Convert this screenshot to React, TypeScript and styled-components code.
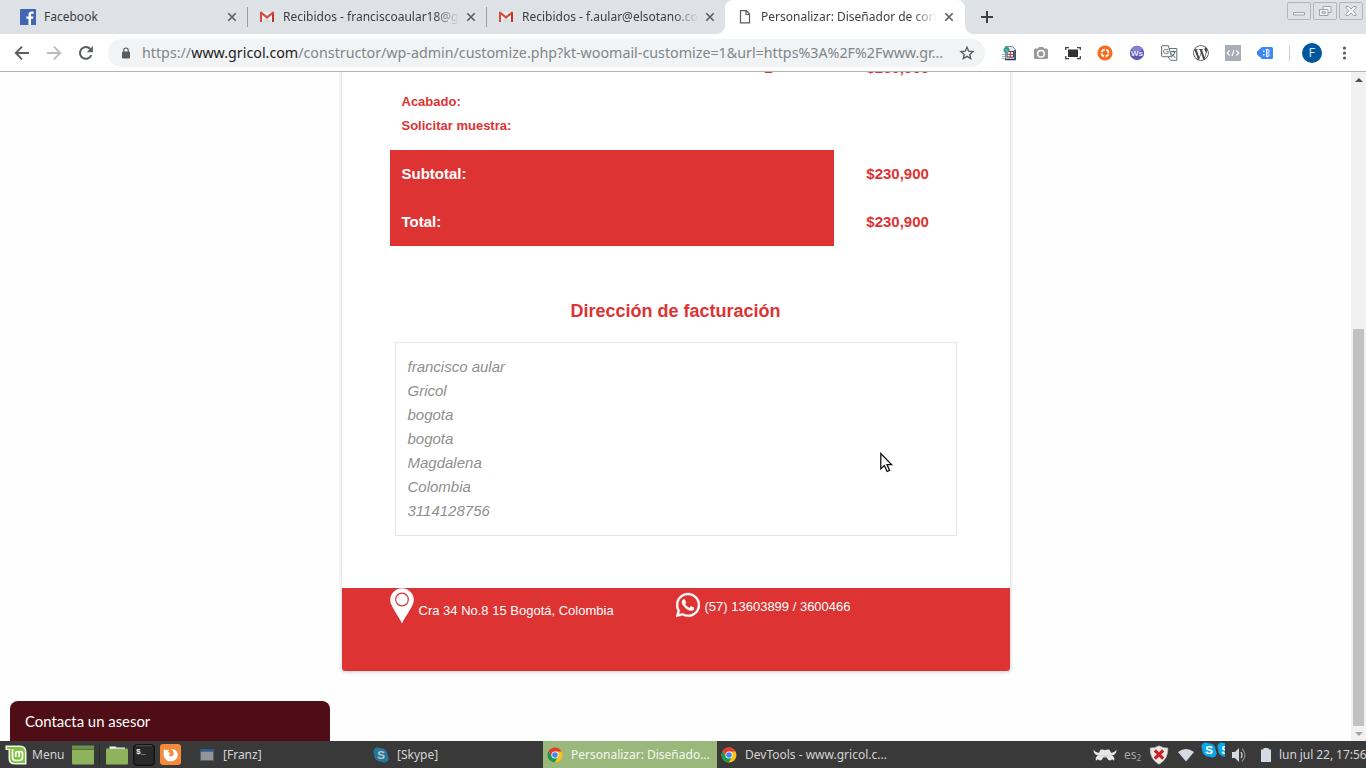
import React from 'react';
import styled, { createGlobalStyle } from 'styled-components';
import { FaWordpressSimple, FaWhatsapp } from 'react-icons/fa';

const GlobalStyle = createGlobalStyle`
  * { box-sizing: border-box; }
  html, body { margin: 0; padding: 0; overflow: hidden; }
  svg { display: block; flex: none; }
`;

const Desktop = styled.div`
  position: relative;
  width: 1366px;
  height: 768px;
  display: flex;
  flex-direction: column;
  overflow: hidden;
  background: #fefefe;
  font-family: 'Noto Sans', sans-serif;
`;

/* ---------- browser ---------- */
const TabStrip = styled.div`
  height: 34px;
  flex: none;
  display: flex;
  background: #dee1e6;
  padding-left: 8px;
`;

const Tab = styled.div<{ $active?: boolean; $line?: boolean }>`
  position: relative;
  width: ${(p) => (p.$active ? 240 : 239)}px;
  height: 34px;
  display: flex;
  align-items: center;
  padding: 0 ${(p) => (p.$active ? 10 : 9)}px 0 12px;
  background: ${(p) => (p.$active ? '#fff' : 'transparent')};
  border-radius: 8px 8px 0 0;
  &::after {
    content: '';
    display: ${(p) => (p.$line ? 'block' : 'none')};
    position: absolute;
    right: -1px;
    top: 7px;
    width: 1px;
    height: 20px;
    background: #989ba0;
  }
`;

const TabFoot = styled.i<{ $side: 'left' | 'right' }>`
  position: absolute;
  bottom: 0;
  ${(p) => p.$side}: -8px;
  width: 8px;
  height: 8px;
  background: radial-gradient(circle at ${(p) => (p.$side === 'left' ? '0 0' : '100% 0')}, transparent 7.5px, #fff 8px);
`;

const TabTitle = styled.span<{ $fade?: boolean }>`
  width: 175px;
  margin-left: 8px;
  overflow: hidden;
  white-space: nowrap;
  font-size: 12px;
  line-height: 18px;
  color: #3c4043;
  ${(p) => p.$fade && 'mask-image: linear-gradient(to right, #000 152px, transparent 176px);'}
`;

const TabClose = styled.div`
  margin-left: auto;
`;

const NewTab = styled.div`
  display: flex;
  align-items: center;
  margin-left: 15px;
`;

const WindowButtons = styled.div`
  display: flex;
  gap: 2px;
  margin: 2px 3px 0 auto;
`;

const WindowButton = styled.div`
  width: 24px;
  height: 18px;
  display: flex;
  align-items: center;
  justify-content: center;
  border: 1px solid #b4b6ba;
  border-radius: 2px;
`;

const Toolbar = styled.div`
  height: 38px;
  flex: none;
  display: flex;
  align-items: center;
  background: #fff;
  border-bottom: 1px solid #b0b3b0;
`;

const NavButtons = styled.div`
  display: flex;
  gap: 16px;
  width: 108px;
  padding-left: 14px;
`;

const AddressBar = styled.div`
  width: 877px;
  height: 28px;
  display: flex;
  align-items: center;
  padding: 0 10px 0 13px;
  border-radius: 14px;
  background: #f1f3f4;
`;

const Url = styled.span`
  width: 817px;
  flex: none;
  margin-left: 11px;
  white-space: nowrap;
  font-size: 14.270px;
  line-height: 20px;
  color: #80868b;
  b { font-weight: 400; color: #202124; }
`;

const Extensions = styled.div`
  display: flex;
  margin-left: 8px;
`;

const Extension = styled.div`
  width: 32px;
  height: 20px;
  display: flex;
  align-items: center;
  justify-content: center;
`;

const ToolbarRule = styled.div`
  width: 1px;
  height: 16px;
  margin: 0 12px 0 8px;
  background: #cfd2d6;
`;

const Avatar = styled.div`
  width: 20px;
  height: 20px;
  border-radius: 50%;
  background: #01579b;
  color: #d5e4f0;
  font: 12px/20px Roboto, sans-serif;
  text-align: center;
`;

/* ---------- page ---------- */
const Viewport = styled.div`
  position: relative;
  height: 669px;
  flex: none;
  display: flex;
  overflow: hidden;
`;

const Page = styled.div`
  flex: 1;
  display: flex;
  align-items: flex-start;
  padding-left: 342px;
`;

const Email = styled.div`
  width: 668px;
  height: 615px;
  margin-top: -16px;
  display: flex;
  flex-direction: column;
  background: #fff;
  border-radius: 3px;
  box-shadow: 0 1px 4px rgba(0, 0, 0, 0.2);
  font-family: 'Liberation Sans', Arial, sans-serif;
  overflow: hidden;
`;

const red = '#dd3333';

const OrderLine = styled.div`
  display: flex;
  height: 34px;
  padding-left: 422.5px;
  font-weight: 700;
  font-size: 15px;
  line-height: 24px;
  color: ${red};
  span { width: 102px; }
`;

const Options = styled.div`
  height: 60px;
  padding-left: 59.5px;
  font-weight: 700;
  font-size: 13px;
  line-height: 24px;
  color: ${red};
`;

const TotalRow = styled.div`
  display: flex;
  height: 48px;
  flex: none;
  margin-left: 48px;
  font-weight: 700;
  font-size: 15px;
  line-height: 48px;
`;

const TotalLabel = styled.div`
  width: 444px;
  padding-left: 11.5px;
  background: ${red};
  color: #fff;
`;

const TotalValue = styled.div`
  padding-left: 32.300px;
  color: ${red};
`;

const AddressTitle = styled.h2`
  height: 26px;
  margin: 52px 1px 18px 0;
  font-size: 18px;
  line-height: 26px;
  text-align: center;
  color: ${red};
`;

const AddressBox = styled.div`
  width: 562px;
  height: 194px;
  margin-left: 53px;
  padding: 12px 11.5px;
  border: 1px solid #e5e5e5;
  font-style: italic;
  font-size: 15px;
  line-height: 24px;
  color: #8f8f8f;
`;

const EmailFooter = styled.div`
  display: flex;
  align-items: flex-start;
  height: 83px;
  margin-top: auto;
  padding-left: 48px;
  background: ${red};
  color: #fff;
  font-size: 13px;
  line-height: 20px;
`;

const FooterCell = styled.div<{ $width: number; $gap: number; $textTop: number }>`
  display: flex;
  width: ${(p) => p.$width}px;
  gap: ${(p) => p.$gap}px;
  span { padding-top: ${(p) => p.$textTop}px; white-space: nowrap; color: #fff; }
`;

const Scrollbar = styled.div`
  width: 15px;
  display: flex;
  flex-direction: column;
  align-items: center;
  background: #f1f1f1;
`;

const ScrollArrow = styled.div`
  height: 15px;
  display: flex;
  align-items: center;
`;

const Thumb = styled.div`
  width: 11px;
  height: 397px;
  margin: 242px 0 0;
  background: #c1c1c1;
`;

const ChatTab = styled.div`
  position: absolute;
  left: 10px;
  bottom: 0;
  width: 320px;
  height: 40px;
  padding-left: 15px;
  border-radius: 8px 8px 0 0;
  background: #4f0e15;
  color: #fff;
  font: 14.900px/40px Lato, sans-serif;
`;

const Pointer = styled.div`
  position: absolute;
  left: 880px;
  top: 452px;
`;

/* ---------- taskbar ---------- */
const Panel = styled.div`
  height: 27px;
  flex: none;
  display: flex;
  align-items: center;
  background: #393939;
  color: #d4d4d4;
  font-size: 12px;
  line-height: 18px;
  white-space: nowrap;
`;

const Launchers = styled.div`
  width: 195px;
  display: flex;
  align-items: center;
  padding-left: 5px;
`;

const MenuLabel = styled.span`
  width: 40px;
  margin-left: 5px;
`;

const LauncherRule = styled.div`
  width: 1px;
  height: 20px;
  margin: 0 6px 0 5px;
  background: #2c2c2c;
`;

const LauncherGap = styled.div`
  width: 5px;
`;

const Task = styled.div<{ $active?: boolean }>`
  width: 174px;
  height: 27px;
  display: flex;
  align-items: center;
  gap: 8px;
  padding-left: 4px;
  background: ${(p) => (p.$active ? '#9ab87c' : 'transparent')};
  color: ${(p) => (p.$active ? '#f4f7f0' : '#d4d4d4')};
`;

const Tray = styled.div`
  display: flex;
  align-items: center;
  margin-left: auto;
`;

const TrayItem = styled.div<{ $width: number }>`
  width: ${(p) => p.$width}px;
  display: flex;
`;

const Clock = styled.span`
  width: 87px;
  letter-spacing: -0.060px;
`;

const Layout = styled.span`
  color: #a5a5a5;
  sub { font-size: 8px; line-height: 0; vertical-align: -2px; }
`;

/* ---------- icons ---------- */
const Gmail = () => (
  <svg width="16" height="16" viewBox="0 0 16 16">
    <path d="M2 3h12v10H2z" fill="#eceff1" />
    <path d="M3 13l5-5 5 5z" fill="#dcdcdc" />
    <path d="M1 3.600Q1 2.400 2.300 2.400L8 7l5.700-4.600Q15 2.400 15 3.600V13h-2V5.800L8 9.800 3 5.800V13H1z" fill="#d54b3d" />
    <path d="M13 5.800V13h2V3.600z" fill="#b93629" />
  </svg>
);

const FacebookLogo = () => (
  <svg width="16" height="16" viewBox="0 0 16 16">
    <rect width="16" height="16" rx=".6" fill="#4267b2" />
    <path d="M11 16v-6.200h2.100l.4-2.400H11V5.900c0-.8.3-1.200 1.300-1.200h1.300V2.600c-3.400-.6-5.100.5-5.100 3v1.800H6.400v2.400h2.100V16z" fill="#fff" />
  </svg>
);

const Doc = () => (
  <svg width="16" height="16" viewBox="0 0 16 16" fill="none" stroke="#5a5d61" strokeWidth="1.200">
    <path d="M3.500 1.600h6L12.500 5v8.900h-9zM9 1.600V5.500h3.500" />
  </svg>
);

const Cross = () => (
  <svg width="12" height="12" viewBox="0 0 12 12" stroke="#5a5d61" strokeWidth="1.600">
    <path d="M2.300 2.300l7.400 7.400M9.700 2.300L2.300 9.700" />
  </svg>
);

const Chrome = () => (
  <svg width="16" height="16" viewBox="0 0 16 16">
    <circle cx="8" cy="8" r="7.500" fill="#fbc116" />
    <path d="M8 8L4.900 9.800 1.500 4.200A7.500 7.500 0 0 1 14.500 4.400H8z" fill="#e33b2e" />
    <path d="M1.500 4.200A7.500 7.500 0 0 0 7.600 15.500L11.100 9.800 8 8 4.900 9.800z" fill="#169a50" />
    <circle cx="8" cy="8" r="3.600" fill="#fff" />
    <circle cx="8" cy="8" r="2.800" fill="#4285f4" />
  </svg>
);

const PageGlobe = () => (
  <svg width="16" height="16" viewBox="0 0 16 16">
    <path d="M4.500 1.500h7l3 3v10h-10z" fill="#dfe7f0" stroke="#5b6c8c" strokeWidth=".8" />
    <path d="M14 5v9.500H4" fill="none" stroke="#24375b" strokeWidth="1.400" />
    <rect x="6" y="6.500" width="6.500" height="5.500" fill="#fff" stroke="#47223a" strokeWidth=".9" />
    <path d="M9.300 6v6.500M6 9.300h6.500" stroke="#b02c42" />
    <circle cx="5.500" cy="5" r="3" fill="#2b9f66" />
    <path d="M3.500 3.500l3 1 1 2-2 1z" fill="#65a9e8" />
    <path d="M.5 9.500h3.500M1 11.500h3M.5 13.500h3.500" stroke="#8fb5ae" strokeWidth=".9" />
  </svg>
);

const Camera = () => (
  <svg width="16" height="16" viewBox="0 0 16 16">
    <path d="M2.500 3.500H5L6 2h4l1 1.500h2.500q1.500 0 1.500 1.500v7.500q0 1.500-1.500 1.500h-11Q1 14 1 12.500V5q0-1.500 1.500-1.500z" fill="#999" />
    <circle cx="8" cy="8.700" r="3.300" fill="none" stroke="#fff" strokeWidth="1.500" />
  </svg>
);

const Capture = () => (
  <svg width="16" height="16" viewBox="0 0 16 16">
    <rect x="3" y="4.500" width="10" height="7.500" fill="#333" />
    <path d="M.7 5V2.700H4M12 2.700h3.300V5M15.300 11v2.600H12M4 13.600H.7V11" fill="none" stroke="#444" strokeWidth="1.300" />
  </svg>
);

const Lifebuoy = () => (
  <svg width="16" height="16" viewBox="0 0 16 16">
    <circle cx="8" cy="8" r="7.600" fill="#f86c1f" />
    <circle cx="8" cy="8" r="3.500" fill="none" stroke="#fff" strokeWidth="1.900" strokeDasharray="4 1.500" strokeDashoffset="-.8" />
  </svg>
);

const WsBall = () => (
  <svg width="16" height="16" viewBox="0 0 16 16">
    <circle cx="8" cy="8" r="7.200" fill="#5f5bb5" />
    <ellipse cx="8" cy="4" rx="5" ry="2.700" fill="#8783d0" />
    <text x="8" y="11" textAnchor="middle" fontSize="8" fontWeight="700" fontFamily="Liberation Sans, sans-serif" fill="#e8e8fa">Ws</text>
  </svg>
);

const Translate = () => (
  <svg width="17" height="16" viewBox="0 0 17 16">
    <path d="M7.500 3.500h8.300v11.800H9.500L7 11.800" fill="#fff" stroke="#66707a" />
    <path d="M1 .7h6.300l3.200 11H1.500Q.6 11.700.6 11V1.200z" fill="#f5f7f8" stroke="#66707a" />
    <text x="1.700" y="9" fontSize="8" fontFamily="Liberation Sans, sans-serif" fill="#4e5861">G</text>
    <path d="M9.500 6.700h5.500M12.200 5.500v1.200M13.700 7c-.5 2.500-2 4-3.200 5M10.500 8.500c1 2 2.500 3.200 4 4" fill="none" stroke="#4e5861" />
  </svg>
);

const CodeBox = () => (
  <svg width="16" height="16" viewBox="0 0 16 16">
    <rect width="16" height="16" fill="#a9adb7" />
    <path d="M4.600 5.500L2.200 8l2.400 2.500M11.400 5.500L13.800 8l-2.400 2.500M9 5l-2 6" fill="none" stroke="#fff" strokeWidth="1.200" />
  </svg>
);

const BlueTag = () => (
  <svg width="16" height="16" viewBox="0 0 16 16">
    <path d="M5 2h9.500Q16 2 16 3.500v9q0 1.500-1.500 1.500H5L0 9.500v-3z" fill="#3f87f5" />
    <path d="M6 5.500h1.500V7H6zM6 9h1.500v1.500H6zM9 4h1.200v8H9zM10 4h1.500v1.200H10zM10 7.400h1.500v1.200H10zM10 10.800h1.500V12H10zM11.400 5h1.100v2.500h-1.100zM11.400 8.500h1.100V11h-1.100z" fill="#fff" />
  </svg>
);

const WinControl = ({ d }: { d: string }) => (
  <svg width="14" height="12" viewBox="0 0 14 12" fill="#f2f3f5" stroke="#9fa2a6" strokeWidth="1"><path d={d} /></svg>
);

const SkypeBlob = ({ dim }: { dim?: boolean }) => (
  <svg width="16" height="16" viewBox="0 0 16 16">
    <g fill={dim ? '#28779b' : '#0da7e8'}>
      <circle cx="8" cy="8" r="6.800" />
      <circle cx="4.700" cy="4.700" r="4.300" />
      <circle cx="11.300" cy="11.300" r="4.300" />
    </g>
    <text x="8" y="12" textAnchor="middle" fontSize="11.500" fontWeight="700" fontFamily="Liberation Sans, sans-serif" fill={dim ? '#b4c6ce' : '#fff'}>S</text>
  </svg>
);

const Mint = () => (
  <svg width="22" height="20" viewBox="0 0 22 20">
    <path d="M.5.5H15q6.500 0 6.500 6.500v12.500H10q-6.500 0-6.500-6V5H.5z" fill="#f1f4ed" />
    <path d="M2 2h13q5 0 5 5v11H10q-5 0-5-5V4H2z" fill="#82c341" />
    <path d="M7.500 4v8q0 3.500 3.500 3.500h3q3.500 0 3.500-3.500V8.500q0-2-1.700-2t-1.700 2V12M14.100 8.500q0-2-1.700-2t-1.700 2V12" fill="none" stroke="#fff" strokeWidth="1.700" />
  </svg>
);

const GreenWindow = () => (
  <svg width="22" height="20" viewBox="0 0 22 20">
    <rect y="1" width="22" height="18.500" rx="1" fill="#8db35c" />
    <path d="M0 .5h22v4H0z" fill="#6f8f48" /><path d="M0 4.500h22" stroke="#55703a" />
  </svg>
);

const Folder = () => (
  <svg width="22" height="20" viewBox="0 0 22 20">
    <path d="M1 3.500h20q1 0 1 1v14q0 1-1 1H1q-1 0-1-1v-14q0-1 1-1z" fill="#8db35c" />
    <path d="M3.500 3.800V1.500h6l1 1H19v1.300z" fill="#f7f7f7" />
  </svg>
);

const Terminal = () => (
  <svg width="22" height="22" viewBox="0 0 22 22">
    <rect x=".7" y=".7" width="20.600" height="20.600" rx="3.500" fill="#292929" stroke="#121212" strokeWidth="1.400" />
    <path d="M3 1.700h16" stroke="#777" strokeWidth=".6" />
    <text x="3" y="9.500" fontSize="8" fontWeight="700" fontFamily="Liberation Mono, monospace" fill="#eee">$_</text>
  </svg>
);

const Firefox = () => (
  <svg width="21" height="21" viewBox="0 0 20 20">
    <rect width="20" height="20" rx="3" fill="#f58a3c" />
    <path d="M3.700 4.500l1.700 1.700c1-.8 2.200-1 3.300-.6L7.500 7.700l2.200.8c0 1-1.200 1.200-1.200 2.200 1.200 2.200 4.500 1 4.500-1.700 0-1.800-1-3.200-2.500-4 4-.6 6.400 2 6.400 5.200 0 3.600-2.900 6.300-6.600 6.300S3.500 13.900 3.500 10.200c0-2 0-3.700.2-5.700z" fill="#fff" />
  </svg>
);

const FranzWindow = () => (
  <svg width="16" height="16" viewBox="0 0 16 16">
    <rect x="1.500" y="2.500" width="13" height="11" fill="#92959a" stroke="#5c5f63" />
    <path d="M1 2h14v2.700H1z" fill="#315985" />
  </svg>
);

const AgentHat = () => (
  <svg width="24" height="16" viewBox="0 0 24 16" fill="#e6e6e6">
    <path d="M.5 2.500q1.500 3 5.500 3.300L7.500 2.800q2.500-.6 4.500.5 2-1.100 4.500-.5L18 5.800q4-.3 5.500-3.300Q23.500 7 20 8.200L12 9 4 8.200Q.5 7 .5 2.500z" />
    <path d="M3 14q-1.500-4.500 3-6l4 .5 2 1 2-1 4-.5q4.500 1.500 3 6-1.500-2.500-3.500-.5-3 0-3.500-3h-4q-.5 3-3.500 3-2-2-3.500.5z" />
  </svg>
);

const ShieldCross = () => (
  <svg width="20" height="20" viewBox="0 0 20 20">
    <path d="M10 .8q4.500 2.700 8.800 2.200Q19.500 14 10 19.200.5 14 1.200 3 5.500 3.500 10 .8z" fill="#ece9e4" stroke="#bcb9b4" strokeWidth=".7" />
    <path d="M5.800 5.300l8.400 8.400M14.200 5.300l-8.400 8.400" stroke="#cb2026" strokeWidth="3.200" />
  </svg>
);

const tabs = [
  { title: 'Facebook', icon: <FacebookLogo />, line: true },
  { title: 'Recibidos - franciscoaular18@g', icon: <Gmail />, line: true },
  { title: 'Recibidos - f.aular@elsotano.co', icon: <Gmail /> },
  { title: 'Personalizar: Diseñador de corr', icon: <Doc />, active: true },
];

const address = ['francisco aular', 'Gricol', 'bogota', 'bogota', 'Magdalena', 'Colombia', '3114128756'];

export default function App() {
  return (
    <Desktop>
      <GlobalStyle />
      <TabStrip>
        {tabs.map((t, i) => (
          <Tab key={i} $active={t.active} $line={t.line}>
            {t.active && <TabFoot $side="left" />}
            {t.active && <TabFoot $side="right" />}
            {t.icon}
            <TabTitle $fade={i > 0}>{t.title}</TabTitle>
            <TabClose><Cross /></TabClose>
          </Tab>
        ))}
        <NewTab>
          <svg width="14" height="14" viewBox="0 0 14 14" stroke="#3c4043" strokeWidth="2"><path d="M7 1v12M1 7h12" /></svg>
        </NewTab>
        <WindowButtons>
          <WindowButton><WinControl d="M1.500 7.500h11v2.500h-11z" /></WindowButton>
          <WindowButton><WinControl d="M5 1.500h8v6h-3v3H1.500v-6H5zM5 4.500h5v3M4 6.700h3.500v1.600H4z" /></WindowButton>
          <WindowButton><WinControl d="M2 1.500h2.500L7 4l2.500-2.500H12v1.700L9.200 6 12 8.800v1.700H9.500L7 8l-2.500 2.500H2V8.800L4.800 6 2 3.200z" /></WindowButton>
        </WindowButtons>
      </TabStrip>
      <Toolbar>
        <NavButtons>
          <svg width="16" height="16" viewBox="0 0 16 16" fill="none" stroke="#5a5d61" strokeWidth="1.900"><path d="M15 8H2.200M8 1.600L1.800 8 8 14.400" /></svg>
          <svg width="16" height="16" viewBox="0 0 16 16" fill="none" stroke="#babcbe" strokeWidth="1.900"><path d="M1 8h12.800M8 1.600L14.200 8 8 14.400" /></svg>
          <svg width="16" height="16" viewBox="0 0 16 16"><path d="M13.300 10.200A5.900 5.900 0 1 1 12.300 4" fill="none" stroke="#5a5d61" strokeWidth="2" /><path d="M14.900 1v6.200H8.700z" fill="#5a5d61" /></svg>
        </NavButtons>
        <AddressBar>
          <svg width="10" height="12" viewBox="0 0 10 12"><rect x="1" y="4.500" width="8" height="7" rx=".8" fill="#5a5d61" /><path d="M2.800 5V3.200a2.200 2.200 0 0 1 4.400 0V5" fill="none" stroke="#5a5d61" strokeWidth="1.200" /></svg>
          <Url>https://<b>www.gricol.com</b>/constructor/wp-admin/customize.php?kt-woomail-customize=1&amp;url=https%3A%2F%2Fwww.gr…</Url>
          <svg width="16" height="16" viewBox="0 0 16 16" fill="none" stroke="#5a5d61" strokeWidth="1.400"><path d="M8 2.300l1.700 3.900 4.300.4-3.200 2.800.9 4.200L8 11.400l-3.700 2.200.9-4.200L2 6.600l4.300-.4z" /></svg>
        </AddressBar>
        <Extensions>
          <Extension><PageGlobe /></Extension>
          <Extension><Camera /></Extension>
          <Extension><Capture /></Extension>
          <Extension><Lifebuoy /></Extension>
          <Extension><WsBall /></Extension>
          <Extension><Translate /></Extension>
          <Extension><FaWordpressSimple size={16} color="#464646" /></Extension>
          <Extension><CodeBox /></Extension>
          <Extension><BlueTag /></Extension>
        </Extensions>
        <ToolbarRule />
        <Avatar>F</Avatar>
        <svg width="44" height="16" viewBox="0 0 44 16" fill="#5a5d61"><circle cx="22.500" cy="3" r="1.600" /><circle cx="22.500" cy="8" r="1.600" /><circle cx="22.500" cy="13" r="1.600" /></svg>
      </Toolbar>

      <Viewport>
        <Page>
          <Email>
            <OrderLine><span>2</span>$230,900</OrderLine>
            <Options>
              <div>Acabado:</div>
              <div>Solicitar muestra:</div>
            </Options>
            <TotalRow><TotalLabel>Subtotal:</TotalLabel><TotalValue>$230,900</TotalValue></TotalRow>
            <TotalRow><TotalLabel>Total:</TotalLabel><TotalValue>$230,900</TotalValue></TotalRow>
            <AddressTitle>Dirección de facturación</AddressTitle>
            <AddressBox>{address.map((line, i) => <div key={i}>{line}</div>)}</AddressBox>
            <EmailFooter>
              <FooterCell $width={286} $gap={4.500} $textTop={13}>
                <svg width="24" height="36" viewBox="0 0 24 36">
                  <path d="M12 .2A11.800 11.800 0 0 0 .2 12C.2 18 8 27 12 35.500 16 27 23.800 18 23.800 12A11.800 11.800 0 0 0 12 .2z" fill="#fff" />
                  <circle cx="12" cy="11.500" r="6.300" fill="none" stroke={red} strokeWidth="1.200" />
                </svg>
                <span>Cra 34 No.8 15 Bogotá, Colombia</span>
              </FooterCell>
              <FooterCell $width={200} $gap={4.500} $textTop={9}>
                <svg width="24" height="34" viewBox="0 0 24 34"><FaWhatsapp x="-1.700" y="3.300" size={27.400} color="#fff" stroke="#fff" strokeWidth={7} /></svg>
                <span>(57) 13603899 / 3600466</span>
              </FooterCell>
            </EmailFooter>
          </Email>
        </Page>
        <Scrollbar>
          <ScrollArrow><svg width="8" height="4" viewBox="0 0 8 4"><path d="M0 4l4-4 4 4z" fill="#505050" /></svg></ScrollArrow>
          <Thumb />
          <ScrollArrow><svg width="8" height="4" viewBox="0 0 8 4"><path d="M0 0l4 4 4-4z" fill="#a3a3a3" /></svg></ScrollArrow>
        </Scrollbar>
        <ChatTab>Contacta un asesor</ChatTab>
      </Viewport>

      <Panel>
        <Launchers>
          <Mint />
          <MenuLabel>Menu</MenuLabel>
          <GreenWindow />
          <LauncherRule />
          <Folder />
          <LauncherGap />
          <Terminal />
          <LauncherGap />
          <Firefox />
        </Launchers>
        <Task><FranzWindow />[Franz]</Task>
        <Task><SkypeBlob dim />[Skype]</Task>
        <Task $active><Chrome />Personalizar: Diseñado...</Task>
        <Task><Chrome />DevTools - www.gricol.c...</Task>
        <Tray>
          <TrayItem $width={31}><AgentHat /></TrayItem>
          <TrayItem $width={25}><Layout>es<sub>2</sub></Layout></TrayItem>
          <TrayItem $width={29}><ShieldCross /></TrayItem>
          <TrayItem $width={23}><svg width="16" height="14" viewBox="0 0 16 14"><path d="M0 4q8-6 16 0L8 13.500z" fill="#d3dae3" /></svg></TrayItem>
          <TrayItem $width={31}>
            <svg width="24" height="26" viewBox="0 0 24 26">
              <SkypeBlob />
              <g transform="translate(16 0)"><SkypeBlob /></g>
            </svg>
          </TrayItem>
          <TrayItem $width={29}><svg width="16" height="16" viewBox="0 0 16 16"><path d="M0 5h3l4-4v14l-4-4H0z" fill="#d3dae3" /><path d="M9 5q2 3 0 6" fill="none" stroke="#c7cbd1" strokeWidth="1.300" /><path d="M10 1.500q6 6.500 0 13" fill="none" stroke="#85888d" strokeWidth="1.300" /></svg></TrayItem>
          <TrayItem $width={18}><svg width="10" height="14" viewBox="0 0 10 14"><path d="M0 1.500h2.500V0h5v1.500H10V14H0z" fill="#d3dae3" /></svg></TrayItem>
          <Clock>lun jul 22, 17:56</Clock>
        </Tray>
      </Panel>

      <Pointer>
        <svg width="14" height="21" viewBox="0 0 14 21"><path d="M.8 1.500v15.300l3.600-3.300 2.700 6 2.500-1.100-2.600-5.800h4.500z" fill="#fff" stroke="#111" strokeWidth="1.300" /></svg>
      </Pointer>
    </Desktop>
  );
}
